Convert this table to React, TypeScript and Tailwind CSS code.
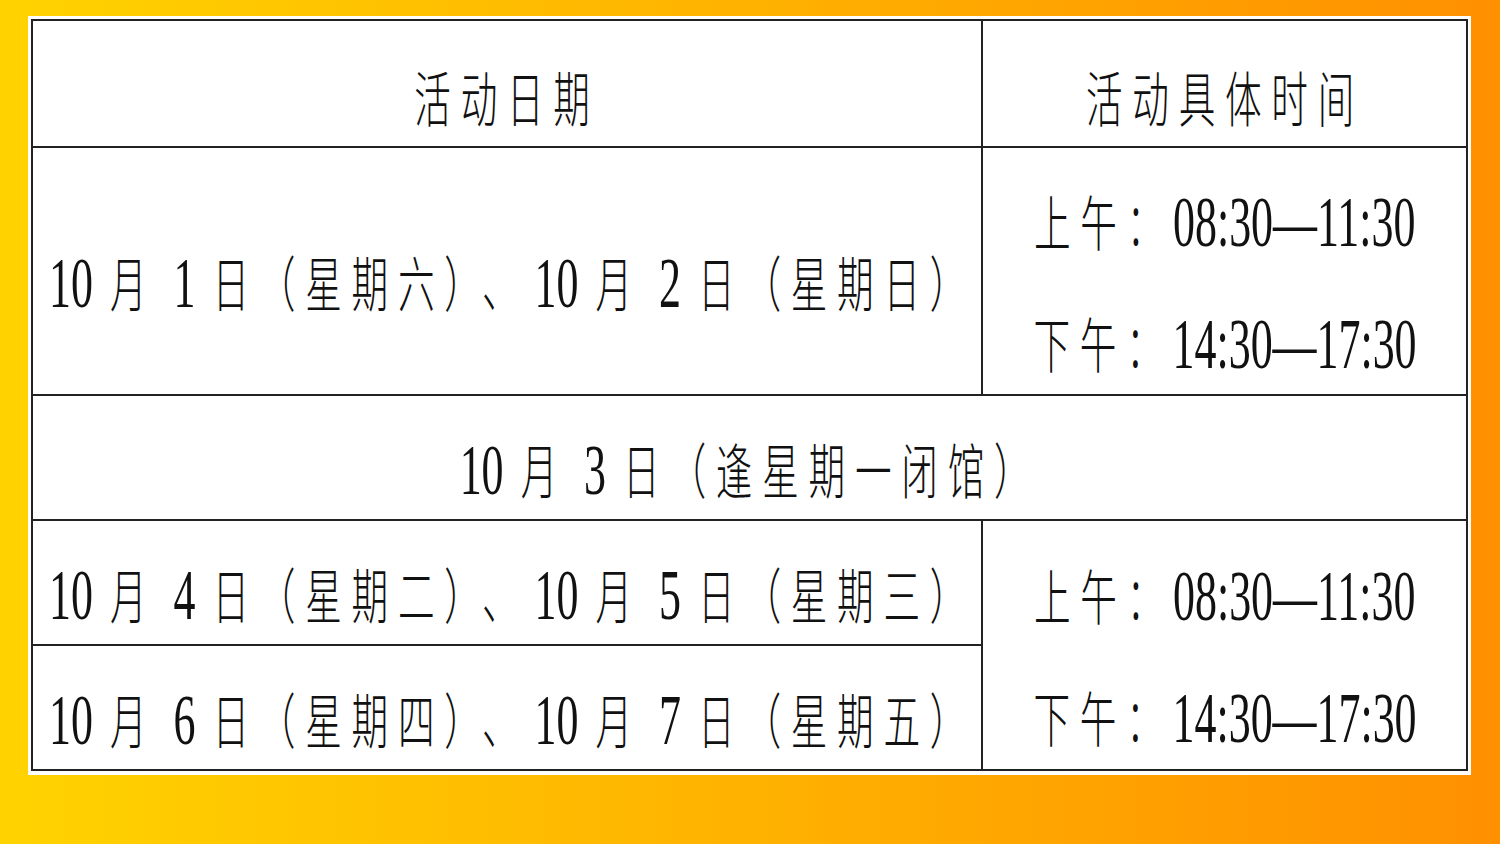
import React from "react";

function CjkRun({ text }: { text: string }) {
  const bits = text.split(/(、)/).filter((b) => b.length > 0);
  return (
    <span className="font-['Noto_Sans_CJK_SC','Noto_Sans_CJK_JP',sans-serif] font-light text-[60px] tracking-[16px]">
      {bits.map((b, k) =>
        b === "、" ? (
          <span key={k} className="ml-[16px] mr-[10px]">
            {b}
          </span>
        ) : (
          <React.Fragment key={k}>{b}</React.Fragment>
        )
      )}
    </span>
  );
}

function Line({ text, align = "center" }: { text: string; align?: "center" | "left" }) {
  const parts = text.split(/([\u0000-\u20ff]+)/).filter((p) => p.length > 0);
  return (
    <span
      className={
        "inline-block shrink-0 whitespace-nowrap leading-none text-[#111] scale-x-[0.61] " +
        (align === "left" ? "origin-left" : "origin-center")
      }
    >
      {parts.map((p, i) =>
        /^[\u0000-\u20ff]+$/.test(p) ? (
          <span key={i} className="font-['Liberation_Serif',serif] text-[72px]">
            {p.split(/( )/).map((q, j) =>
              q === " " ? (
                <span key={j} className="inline-block w-[28px]" />
              ) : (
                <React.Fragment key={j}>{q}</React.Fragment>
              )
            )}
          </span>
        ) : (
          <CjkRun key={i} text={p} />
        )
      )}
    </span>
  );
}

const cell = "min-w-0 overflow-visible border-[#222] flex items-center pt-[24px]";

export default function App() {
  return (
    <div className="w-[1500px] h-[844px] overflow-hidden bg-[linear-gradient(90deg,#FFD300_0%,#FFB200_50%,#FF9000_100%)] pl-[28px] pt-[16px]">
      <div className="w-[1443px] h-[759px] bg-white pt-[3px] pl-[3px] pr-[3px]">
        <div className="w-[1437px] h-[752px] border-2 border-[#222] grid grid-cols-[950px_minmax(0,1fr)] grid-rows-[127px_248px_125px_125px_minmax(0,1fr)]">
          {/* header */}
          <div className={cell + " border-r-2 border-b-2 justify-center"}>
            <Line text="活动日期" />
          </div>
          <div className={cell + " border-b-2 justify-center"}>
            <Line text="活动具体时间" />
          </div>

          {/* row 2 */}
          <div className={cell + " border-r-2 border-b-2 justify-start pl-[16px]"}>
            <Line align="left" text="10 月 1 日（星期六）、10 月 2 日（星期日）" />
          </div>
          <div className={cell + " border-b-2 flex-col justify-center gap-[50px]"}>
            <Line text="上午：08:30—11:30" />
            <Line text="下午：14:30—17:30" />
          </div>

          {/* row 3 */}
          <div className={cell + " col-span-2 border-b-2 justify-center"}>
            <Line text="10 月 3 日（逢星期一闭馆）" />
          </div>

          {/* row 4 */}
          <div className={cell + " border-r-2 border-b-2 justify-start pl-[16px]"}>
            <Line align="left" text="10 月 4 日（星期二）、10 月 5 日（星期三）" />
          </div>
          <div className={cell + " row-span-2 flex-col justify-center gap-[50px]"}>
            <Line text="上午：08:30—11:30" />
            <Line text="下午：14:30—17:30" />
          </div>

          {/* row 5 */}
          <div className={cell + " border-r-2 justify-start pl-[16px]"}>
            <Line align="left" text="10 月 6 日（星期四）、10 月 7 日（星期五）" />
          </div>
        </div>
      </div>
    </div>
  );
}
